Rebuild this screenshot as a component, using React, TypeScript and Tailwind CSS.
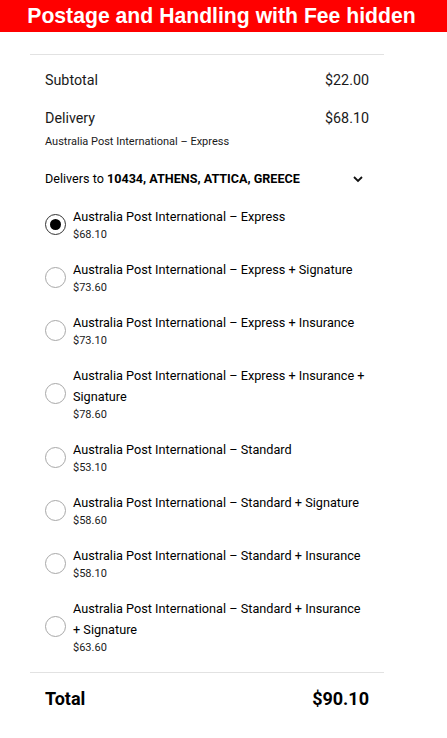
import React from "react";

const options = [
  { title: "Australia Post International – Express", price: "$68.10" },
  { title: "Australia Post International – Express + Signature", price: "$73.60" },
  { title: "Australia Post International – Express + Insurance", price: "$73.10" },
  { title: "Australia Post International – Express + Insurance + Signature", price: "$78.60" },
  { title: "Australia Post International – Standard", price: "$53.10" },
  { title: "Australia Post International – Standard + Signature", price: "$58.60" },
  { title: "Australia Post International – Standard + Insurance", price: "$58.10" },
  { title: "Australia Post International – Standard + Insurance + Signature", price: "$63.60" },
];

function Radio({ checked }: { checked: boolean }) {
  return (
    <div
      className={
        checked
          ? "w-[21px] h-[21px] shrink-0 rounded-full border-[1.5px] border-[#333] flex items-center justify-center"
          : "w-[21px] h-[21px] shrink-0 rounded-full border-[1.5px] border-[#a8a8a8]"
      }
    >
      {checked && <div className="w-[11px] h-[11px] rounded-full bg-black" />}
    </div>
  );
}

export default function App() {
  return (
    <div className="w-[447px] h-[738px] bg-white overflow-hidden" style={{ fontFamily: "Roboto, 'Liberation Sans', sans-serif" }}>
      <div className="h-[32px] w-full bg-[#ff0000] flex items-center justify-center pr-[4px]">
        <span
          className="text-white font-bold text-[21.2px] leading-none"
          style={{ fontFamily: "'Liberation Sans', Arial, sans-serif" }}
        >
          Postage and Handling with Fee hidden
        </span>
      </div>
      <div className="ml-[30px] w-[354px] mt-[22px] border-t border-[#e2e2e2]">
        <div className="px-[15px] pt-[14px] text-[#1a1a1a]">
          <div className="flex justify-between text-[14.3px] leading-[22px]">
            <span>Subtotal</span>
            <span>$22.00</span>
          </div>
          <div className="flex justify-between text-[14.3px] leading-[22px] mt-[16px]">
            <span>Delivery</span>
            <span>$68.10</span>
          </div>
          <div className="text-[11px] leading-[16px] mt-[5px]">Australia Post International – Express</div>
          <div className="flex items-center justify-between mt-[19px] text-[12.6px] leading-[20px] text-black">
            <span>
              Delivers to <span className="font-bold">10434, ATHENS, ATTICA, GREECE</span>
            </span>
            <svg width="12" height="8" viewBox="0 0 12 8" className="mr-[5px]">
              <path d="M2 2 L6 6 L10 2" fill="none" stroke="#111" strokeWidth="1.8" />
            </svg>
          </div>
          <div className="mt-[17px] flex flex-col gap-[17px]">
            {options.map((o, i) => (
              <div key={i} className="flex items-center">
                <div className="w-[28px] shrink-0">
                  <Radio checked={i === 0} />
                </div>
                <div className="w-[294px]">
                  <div className="text-[12.7px] leading-[21px] text-black">{o.title}</div>
                  <div className="text-[11px] leading-[15px] text-[#1a1a1a]">{o.price}</div>
                </div>
              </div>
            ))}
          </div>
        </div>
        <div className="mt-[17px] border-t border-[#e2e2e2] px-[15px] pt-[14px]">
          <div className="flex justify-between text-[18px] leading-[24px] font-bold text-black">
            <span>Total</span>
            <span>$90.10</span>
          </div>
        </div>
      </div>
    </div>
  );
}
